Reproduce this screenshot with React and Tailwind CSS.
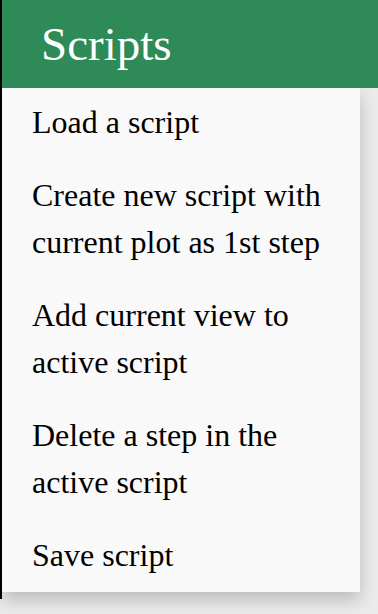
export default function App() {
  const items = [
    ["Load a script"],
    ["Create new script with", "current plot as 1st step"],
    ["Add current view to", "active script"],
    ["Delete a step in the", "active script"],
    ["Save script"],
  ];
  return (
    <div
      className="flex w-full h-[614px] bg-[#ebebeb] overflow-hidden"
      style={{ fontFamily: '"Liberation Serif", "Times New Roman", serif' }}
    >
      <div className="relative z-10 w-[2px] h-[599px] bg-black shrink-0" />
      <div className="flex flex-col flex-1">
        <div className="relative z-10 h-[88px] bg-[#2e8b57] flex items-center pl-[39px]">
          <span className="text-white text-[47px] leading-normal">Scripts</span>
        </div>
        <div className="w-[358px] bg-[#f9f9f9] shadow-[0_8px_16px_0_rgba(0,0,0,0.2)] flex flex-col">
          {items.map((lines, i) => (
            <div
              key={i}
              className="pl-[30px] pt-[11px] pb-[15px] last:pb-[13px] text-black text-[32px] leading-[47px]"
            >
              {lines.map((l, j) => (
                <div key={j}>{l}</div>
              ))}
            </div>
          ))}
        </div>
      </div>
    </div>
  );
}
